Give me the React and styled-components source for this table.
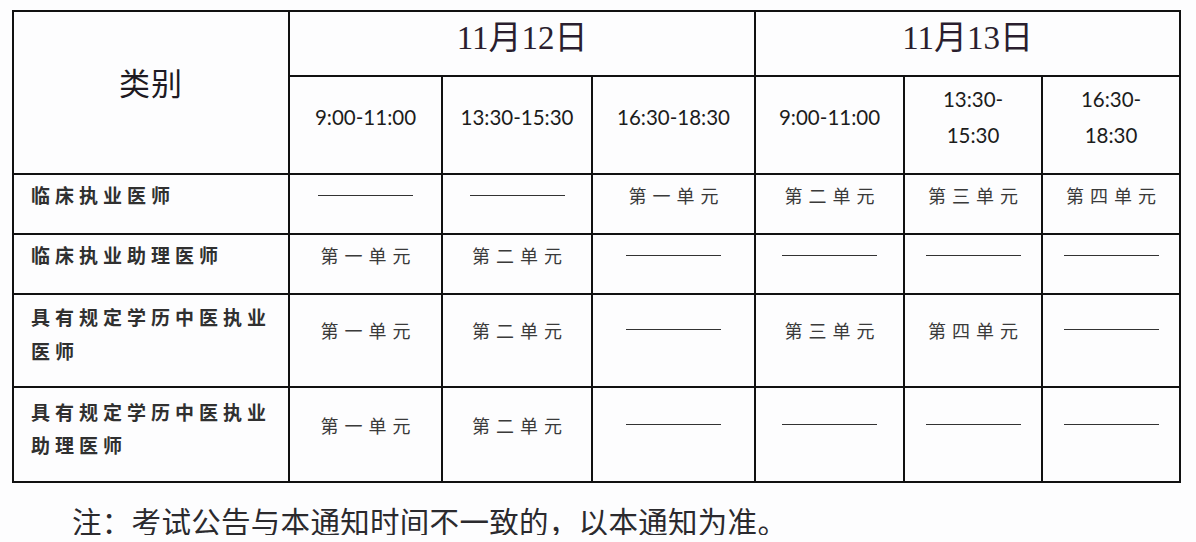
import React from 'react';
import styled, { createGlobalStyle } from 'styled-components';

const GlobalStyle = createGlobalStyle`
  html, body {
    margin: 0;
    padding: 0;
    background: #fdfdfe;
  }
`;

const Page = styled.div`
  width: 1196px;
  padding: 10px 0 0 12px;
  box-sizing: border-box;
  font-family: "Noto Sans CJK SC", sans-serif;
  color: #1e1a22;
`;

const Table = styled.table`
  border-collapse: collapse;
  table-layout: fixed;
  width: 1167px;
  border: 2px solid #111;
`;

const Cell = styled.td`
  border: 2px solid #111;
  padding: 0;
  text-align: center;
  vertical-align: middle;
  height: ${p => p.$h}px;
  box-sizing: border-box;
`;

const CategoryHead = styled(Cell)`
  font-size: 31px;
  padding-bottom: 22px;
  letter-spacing: 1px;
`;

const DateHead = styled(Cell)`
  font-family: "Liberation Serif", "Noto Sans CJK SC", serif;
  font-size: 33px;
  line-height: 36px;
  padding-bottom: 12px;
  color: #2a1e2e;
`;

const TimeHead = styled(Cell)`
  font-family: Lato, "Open Sans", sans-serif;
  font-size: 20.5px;
  line-height: 36px;
  padding-bottom: 16px;
  color: #1c1c1c;
`;

const Category = styled(Cell)`
  text-align: left;
  vertical-align: top;
  padding: ${p => p.$pt}px 10px 0 17px;
  font-size: 19px;
  font-weight: 700;
  letter-spacing: 5px;
  line-height: ${p => p.$lh || 34}px;
  color: #303030;
`;

const Slot = styled(Cell)`
  font-size: 18px;
  letter-spacing: 6px;
  color: #3a3a3a;
  padding-bottom: ${p => p.$pb}px;
  padding-left: 6px;
`;

const Dash = styled.div`
  width: 95px;
  height: 1px;
  margin: 0 auto;
  background: #333;
  transform: translateX(-3px);
`;

const Note = styled.p`
  margin: 22px 0 0 60px;
  font-size: 29.5px;
  letter-spacing: 0.3px;
  color: #2b2a2e;
  line-height: 30px;
  white-space: nowrap;
`;

const widths = [276, 153, 150, 163, 149, 138, 138];

const rows = [
  { name: ['临床执业医师'], h: 60, pt: 3, pb: 18, cells: ['-', '-', '第一单元', '第二单元', '第三单元', '第四单元'] },
  { name: ['临床执业助理医师'], h: 60, pt: 3, pb: 18, cells: ['第一单元', '第二单元', '-', '-', '-', '-'] },
  { name: ['具有规定学历中医执业', '医师'], h: 93, pt: 5, pb: 22, cells: ['第一单元', '第二单元', '-', '第三单元', '第四单元', '-'] },
  { name: ['具有规定学历中医执业', '助理医师'], h: 95, pt: 7, pb: 20, lh: 33, cells: ['第一单元', '第二单元', '-', '-', '-', '-'] },
];

export default function App() {
  return (
    <Page>
      <GlobalStyle />
      <Table>
        <colgroup>
          {widths.map((w, i) => <col key={i} style={{ width: w }} />)}
        </colgroup>
        <tbody>
          <tr>
            <CategoryHead rowSpan={2} $h={65}>类别</CategoryHead>
            <DateHead colSpan={3} $h={65}>11月12日</DateHead>
            <DateHead colSpan={3} $h={65}>11月13日</DateHead>
          </tr>
          <tr>
            <TimeHead $h={98}>9:00-11:00</TimeHead>
            <TimeHead $h={98}>13:30-15:30</TimeHead>
            <TimeHead $h={98}>16:30-18:30</TimeHead>
            <TimeHead $h={98}>9:00-11:00</TimeHead>
            <TimeHead $h={98}>13:30-<br />15:30</TimeHead>
            <TimeHead $h={98}>16:30-<br />18:30</TimeHead>
          </tr>
          {rows.map((r, i) => (
            <tr key={i}>
              <Category $h={r.h} $pt={r.pt} $lh={r.lh}>
                {r.name.map((n, j) => <div key={j}>{n}</div>)}
              </Category>
              {r.cells.map((c, j) => (
                <Slot key={j} $h={r.h} $pb={r.pb}>
                  {c === '-' ? <Dash /> : c}
                </Slot>
              ))}
            </tr>
          ))}
        </tbody>
      </Table>
      <Note>注：考试公告与本通知时间不一致的，以本通知为准。</Note>
    </Page>
  );
}
